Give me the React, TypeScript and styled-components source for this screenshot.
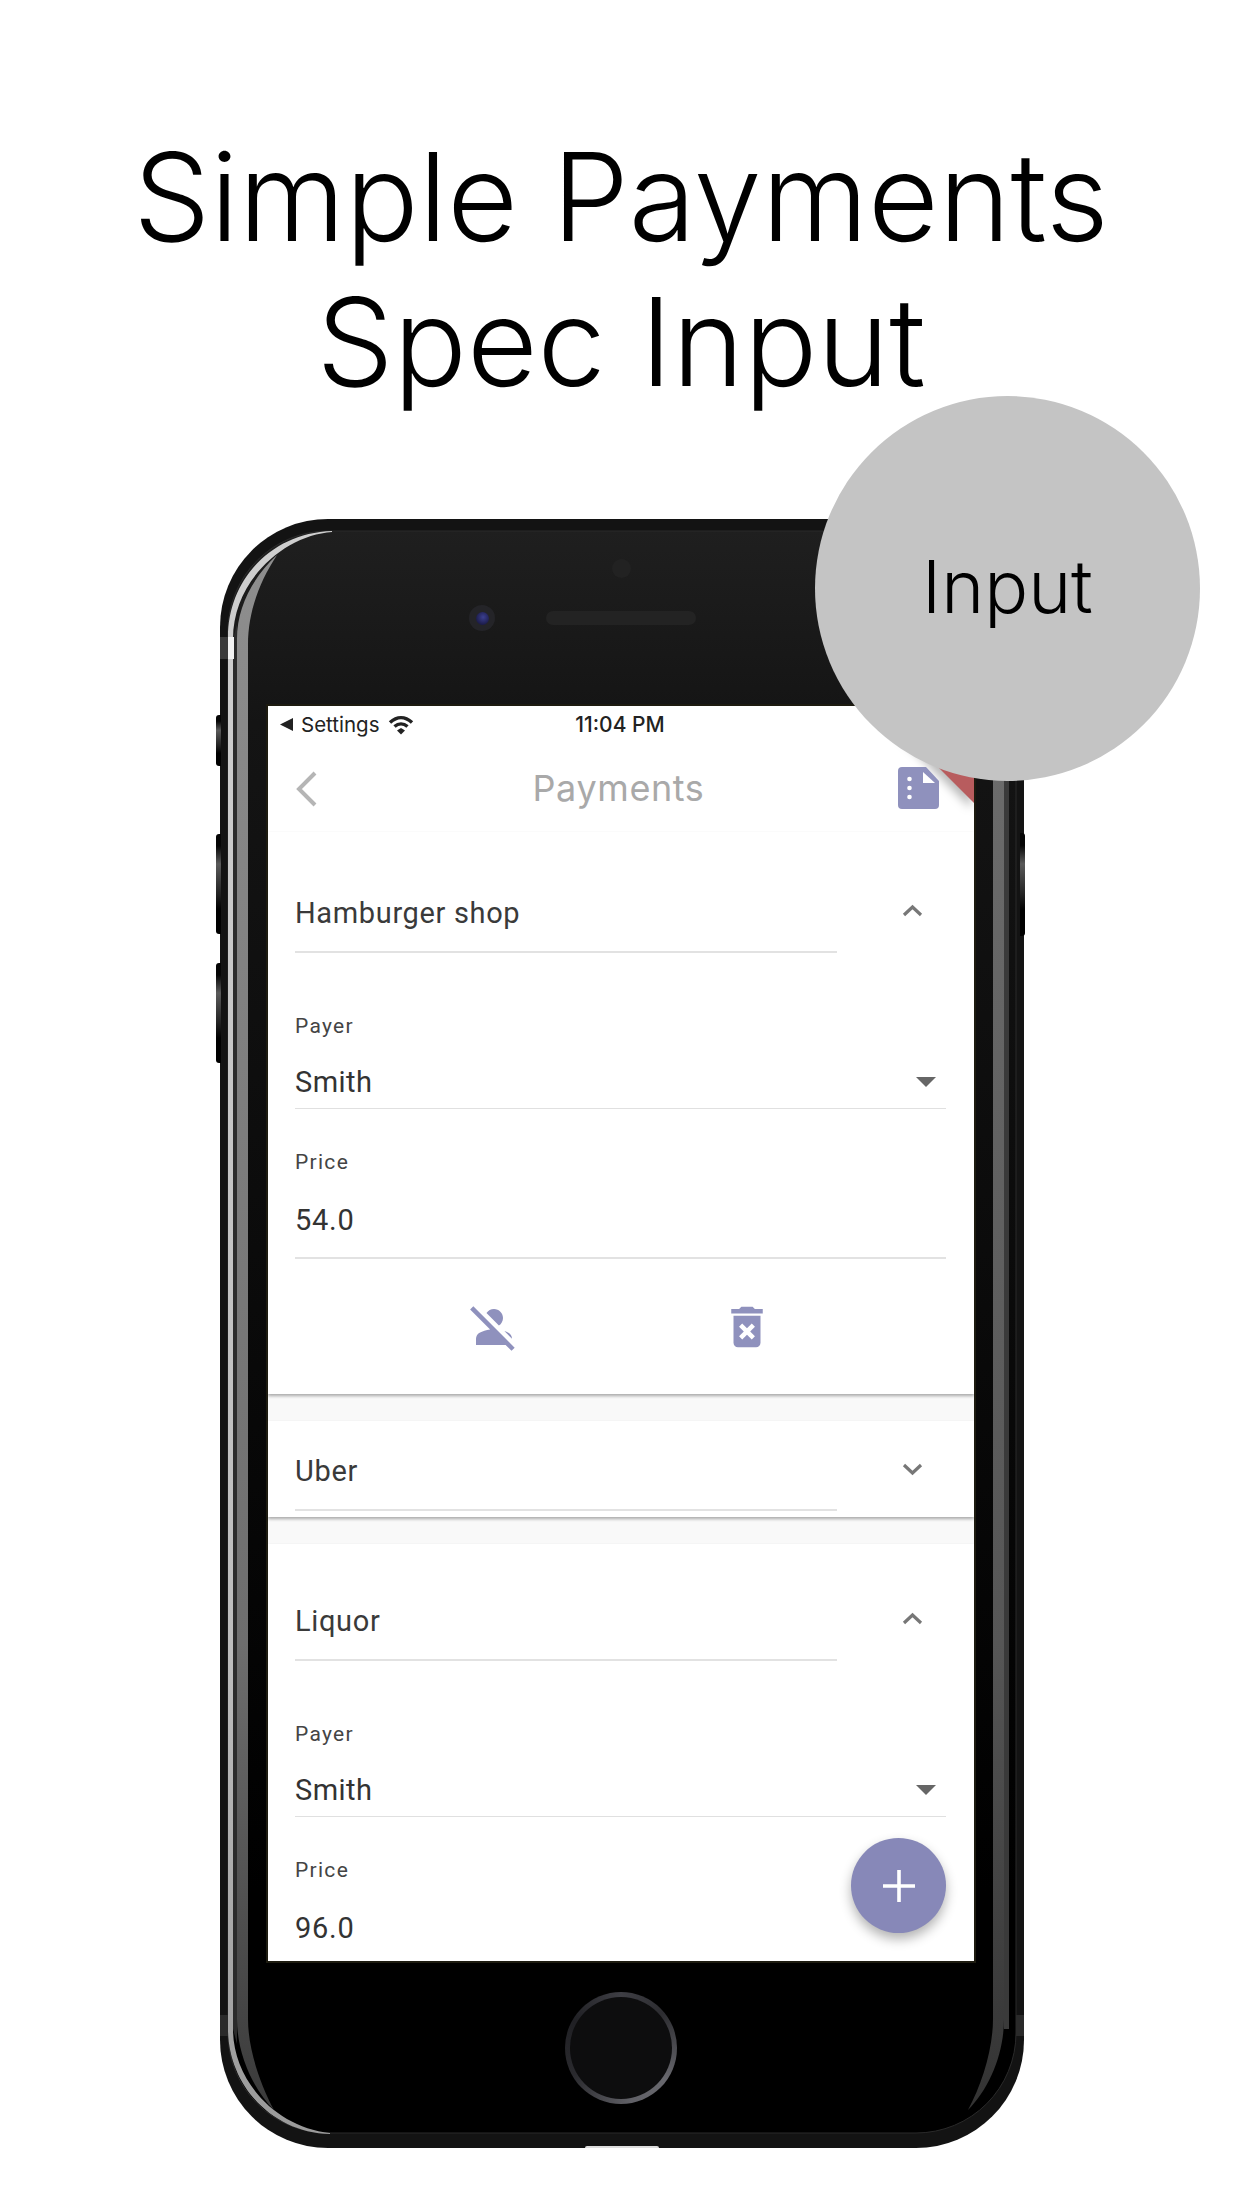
import React from "react";
import styled, { createGlobalStyle } from "styled-components";

const Global = createGlobalStyle`
  html, body { margin: 0; padding: 0; background: #fff; }
  * { box-sizing: border-box; }
`;

const ACCENT = "#8f91bd";

const Page = styled.div`
  position: relative;
  width: 1242px;
  height: 2208px;
  overflow: hidden;
  background: #fff;
  padding-top: 124px;
  display: flex;
  flex-direction: column;
`;
const Title = styled.h1`
  margin: 0 0 105px;
  text-align: center;
  font: 350 122px/145px Inter, "Liberation Sans", sans-serif;
  color: #000;
`;
const Badge = styled.div`
  position: absolute;
  z-index: 5;
  left: 815px;
  top: 396px;
  width: 385px;
  height: 385px;
  border-radius: 50%;
  background: #c4c4c4;
  display: flex;
  align-items: center;
  justify-content: center;
  padding-bottom: 4px;
  font: 350 73px/1 Inter, "Liberation Sans", sans-serif;
  color: #000;
`;
const Phone = styled.div`
  position: relative;
  width: 804px;
  height: 1629px;
  margin-left: 220px;
  display: flex;
  flex-direction: column;
  padding: 0 50px 0 48px;
`;
const Chrome = styled.svg`
  position: absolute;
  inset: 0;
`;
const SideButton = styled.div<{ $side: "left" | "right"; $top: number; $h: number }>`
  position: absolute;
  top: ${(p) => p.$top}px;
  height: ${(p) => p.$h}px;
  width: 5px;
  ${(p) => (p.$side === "left" ? "left: -4px; border-radius: 3px 0 0 3px;" : "right: -1px; border-radius: 0 3px 3px 0;")}
  background: linear-gradient(#050505 0%, #050505 12%, #5a5a5a 30%, #222 60%, #000 75%, #000 100%);
`;
const TopBezel = styled.div`
  position: relative;
  height: 187px;
  display: flex;
  flex-direction: column;
  align-items: center;
  padding-top: 40px;
`;
const Sensor = styled.div`
  width: 19px;
  height: 19px;
  border-radius: 50%;
  background: #222;
`;
const Speaker = styled.div`
  position: relative;
  margin-top: 33px;
  width: 150px;
  height: 14px;
  border-radius: 7px;
  background: #232323;
`;
const Camera = styled.div`
  position: absolute;
  left: -77px;
  top: -6px;
  width: 26px;
  height: 26px;
  border-radius: 50%;
  background: #242428;
  display: flex;
  align-items: center;
  justify-content: center;
  &::after {
    content: "";
    width: 13px;
    height: 13px;
    border-radius: 50%;
    background: radial-gradient(circle at 55% 40%, #3b3f8f, #1c1c4a 70%);
  }
`;
const Screen = styled.div`
  position: relative;
  height: 1255px;
  width: 706px;
  background: #fff;
  overflow: hidden;
  display: flex;
  flex-direction: column;
  outline: 2px solid #1d1b10;
  font-family: Roboto, "Liberation Sans", sans-serif;
`;
const BottomBezel = styled.div`
  position: relative;
  height: 187px;
  display: flex;
  justify-content: center;
  padding-top: 31px;
`;
const HomeRing = styled.div`
  width: 112px;
  height: 112px;
  border-radius: 50%;
  padding: 5px;
  background: conic-gradient(from 0deg, #3e3e44, #2c2c30 50deg, #68686e 125deg, #606066 170deg, #2a2a2e 240deg, #202024 300deg, #3e3e44);
`;
const HomeFace = styled.div`
  width: 100%;
  height: 100%;
  border-radius: 50%;
  background: #0d0d0e;
`;
const Lip = styled.div`
  position: absolute;
  left: 317px;
  bottom: 0;
  width: 74px;
  height: 2px;
  background: #ddd;
  border-radius: 2px 2px 0 0;
`;
const StatusBar = styled.div`
  height: 37px;
  margin-bottom: 3px;
  flex: none;
  display: flex;
  align-items: center;
  padding: 0 12px;
  font-family: Inter, "Liberation Sans", sans-serif;
  font-size: 20.5px;
  color: #222;
`;
const StatusLeft = styled.div`
  display: flex;
  align-items: center;
  gap: 8px;
  width: 295px;
`;
const StatusTime = styled.div`
  font-weight: 500;
  width: 90px;
  text-align: center;
  font-size: 21px;
  white-space: nowrap;
`;
const NavBar = styled.div`
  height: 86px;
  flex: none;
  display: grid;
  grid-template-columns: 1fr auto 1fr;
  align-items: center;
  padding: 0 34px 0 27px;
`;
const NavTitle = styled.div`
  font: 400 36px/1 Inter, "Liberation Sans", sans-serif;
  letter-spacing: 0.6px;
  color: #a9a9a9;
  margin: -2px -2px 0 0;
`;
const List = styled.div`
  flex: 1;
  background: #f9f9f9;
  display: flex;
  flex-direction: column;
  gap: 27px;
`;
const Card = styled.div<{ $top: number }>`
  flex: none;
  background: #fff;
  padding: ${(p) => p.$top}px 28px 0 27px;
  box-shadow: 0 2px 3px rgba(0, 0, 0, 0.32);
`;
const Header = styled.div<{ $flush?: boolean }>`
  display: flex;
  margin-bottom: ${(p) => (p.$flush ? 6 : 0)}px;
`;
const NameField = styled.div`
  width: 542px;
  padding: 0 0 20px;
  border-bottom: 2px solid #e2e2e2;
  font-size: 29px;
  line-height: 36px;
  letter-spacing: 0.65px;
  color: #3a3a3a;
`;
const HeaderIcon = styled.svg<{ $up?: boolean }>`
  margin: ${(p) => (p.$up ? 9 : 10)}px 0 0 65px;
  flex: none;
`;
const FieldLabel = styled.div<{ $gap: number }>`
  margin-top: ${(p) => p.$gap}px;
  font-size: 21px;
  line-height: 24px;
  letter-spacing: 1.3px;
  color: #444;
`;
const SelectValue = styled.div`
  margin-top: 26px;
  padding: 0 10px 8px 0;
  border-bottom: 1px solid #e0e0e0;
  display: flex;
  align-items: center;
  justify-content: space-between;
  font-size: 29px;
  line-height: 36px;
  letter-spacing: 0.45px;
  color: #333;
`;
const InputValue = styled.div<{ $last?: boolean }>`
  margin-top: 27px;
  padding: 1px 0 19px;
  border-bottom: ${(p) => (p.$last ? "none" : "2px solid #e2e2e2")};
  font-size: 29px;
  line-height: 36px;
  letter-spacing: 0.75px;
  color: #333;
`;
const Actions = styled.div`
  height: 135px;
  display: flex;
  align-items: center;
  justify-content: center;
  gap: 199px;
  margin-right: 0;
`;
const Fab = styled.div`
  position: absolute;
  right: 28px;
  bottom: 28px;
  width: 95px;
  height: 95px;
  border-radius: 50%;
  background: #8788b8;
  box-shadow: 0 6px 12px rgba(0, 0, 0, 0.3);
  display: flex;
  align-items: center;
  justify-content: center;
`;
const DebugCorner = styled.div`
  position: absolute;
  top: 0;
  right: 0;
  width: 97px;
  height: 97px;
  filter: drop-shadow(-3px 5px 5px rgba(0, 0, 0, 0.28));
  &::after {
    content: "";
    display: block;
    width: 100%;
    height: 100%;
    background: #b85c5e;
    clip-path: polygon(0 0, 100% 0, 100% 100%);
  }
`;
const BackIcon = styled.svg`
  justify-self: start;
`;
const DocIcon = styled.svg`
  position: relative;
  z-index: 1;
  justify-self: end;
  margin-top: -3px;
`;

const Chevron = ({ up }: { up?: boolean }) => (
  <HeaderIcon $up={up} width="21" height="13" viewBox="0 0 21 13">
    <polyline
      points={up ? "2,11 10.5,3 19,11" : "2,2 10.5,10 19,2"}
      fill="none"
      stroke="#777"
      strokeWidth="3.2"
    />
  </HeaderIcon>
);

const Caret = () => (
  <svg width="20" height="10" viewBox="0 0 20 10">
    <polygon points="0,0 20,0 10,10" fill="#666" />
  </svg>
);

const PersonOff = () => (
  <svg width="54" height="54" viewBox="0 0 24 24">
    <path
      fill={ACCENT}
      d="M8.65 5.82C9.36 4.72 10.6 4 12 4c2.21 0 4 1.79 4 4 0 1.4-.72 2.64-1.82 3.35L8.65 5.82zM20 17.17c-.02-1.1-.63-2.11-1.61-2.62-.54-.28-1.13-.54-1.77-.76L20 17.17zm1.19 4.02L2.81 2.81 1.39 4.22l8.89 8.89c-1.81.23-3.39.79-4.67 1.45C4.61 15.07 4 16.1 4 17.22V20h13.17l2.61 2.61 1.41-1.42z"
    />
  </svg>
);

const TrashX = () => (
  <svg width="54" height="54" viewBox="0 0 24 24">
    <path
      fill={ACCENT}
      d="M6 19c0 1.1.9 2 2 2h8c1.1 0 2-.9 2-2V7H6v12zm2.46-7.12l1.41-1.41L12 12.59l2.12-2.12 1.41 1.41L13.41 14l2.12 2.12-1.41 1.41L12 15.41l-2.12 2.12-1.41-1.41L10.59 14l-2.13-2.12zM15.5 4l-1-1h-5l-1 1H5v2h14V4z"
    />
  </svg>
);

const Fields = ({ price, last }: { price: string; last?: boolean }) => (
  <>
    <FieldLabel $gap={61}>Payer</FieldLabel>
    <SelectValue>
      <span>Smith</span>
      <Caret />
    </SelectValue>
    <FieldLabel $gap={41}>Price</FieldLabel>
    <InputValue $last={last}>{price}</InputValue>
  </>
);

const PhoneChrome = () => (
  <Chrome width="804" height="1629" viewBox="0 0 804 1629">
    <defs>
      <linearGradient id="body" x1="0" y1="0" x2="0" y2="1">
        <stop offset="0" stopColor="#1f1f1f" />
        <stop offset="0.12" stopColor="#141414" />
        <stop offset="0.85" stopColor="#000" />
        <stop offset="1" stopColor="#000" />
      </linearGradient>
      <linearGradient id="bandL" x1="0" y1="0" x2="0" y2="1">
        <stop offset="0" stopColor="#8e8e8e" />
        <stop offset="0.7" stopColor="#6e6e6e" />
        <stop offset="1" stopColor="#3a3a3a" />
      </linearGradient>
      <linearGradient id="bandR" x1="0" y1="0" x2="0" y2="1">
        <stop offset="0" stopColor="#707070" />
        <stop offset="0.7" stopColor="#565656" />
        <stop offset="1" stopColor="#333" />
      </linearGradient>
      <linearGradient id="silver" x1="0" y1="0" x2="0" y2="1">
        <stop offset="0" stopColor="#cfcfcf" />
        <stop offset="0.7" stopColor="#bdbdbd" />
        <stop offset="1" stopColor="#9a9a9a" />
      </linearGradient>
    </defs>
    <rect x="0" y="0" width="804" height="1629" rx="108" fill="#131313" />
    <rect x="8" y="12" width="788" height="1602" rx="100" fill="url(#body)" stroke="#2a2a2a" strokeWidth="1" />
    <path
      fill="url(#silver)"
      d="M8 118C8 62 50 14 112 12L112 13C66 16 13 60 13 120L13 1510C13 1562 56 1608 110 1614L110 1615C52 1614 8 1566 8 1510Z"
    />
    <path fill="#2b2b2b" d="M13 120L17 105L17 1525L13 1510Z" />
    <path
      fill="url(#bandL)"
      d="M17 1500L17 120C17 88 33 58 57 36C40 62 28 92 28 126L28 1500C28 1530 40 1565 54 1591C33 1570 17 1535 17 1500Z"
    />
    <path
      fill="url(#bandR)"
      d="M784 1500L784 120C784 88 770 58 746 36C762 62 773 92 773 126L773 1500C773 1530 762 1565 748 1591C769 1570 784 1535 784 1500Z"
    />
    <path fill="#3a3a3a" d="M784 120L789 120L789 1510L784 1510Z" />
    <rect x="0" y="118" width="8" height="22" fill="#3a3a3a" />
    <rect x="8" y="118" width="6" height="22" fill="#f2f2f2" />
    <rect x="0" y="1496" width="8" height="21" fill="#2a2a2a" />
    <rect x="796" y="1496" width="8" height="21" fill="#2a2a2a" />
  </Chrome>
);

export default function App() {
  return (
    <Page>
      <Global />
      <Title>
        Simple Payments
        <br />
        Spec Input
      </Title>
      <Badge>Input</Badge>
      <Phone>
        <PhoneChrome />
        <SideButton $side="left" $top={196} $h={51} />
        <SideButton $side="left" $top={315} $h={100} />
        <SideButton $side="left" $top={444} $h={100} />
        <SideButton $side="right" $top={314} $h={103} />
        <TopBezel>
          <Sensor />
          <Speaker>
            <Camera />
          </Speaker>
        </TopBezel>
        <Screen>
          <DebugCorner />
          <StatusBar>
            <StatusLeft>
              <svg width="13" height="13" viewBox="0 0 13 13">
                <polygon points="13,0 13,13 0,6.5" fill="#222" />
              </svg>
              <span>Settings</span>
              <svg width="26" height="20" viewBox="0 0 26 20">
                <path d="M2 7.5C9 1 17 1 24 7.5" fill="none" stroke="#222" strokeWidth="3.4" />
                <path d="M6.5 11.5C10.5 8 15.5 8 19.5 11.5" fill="none" stroke="#222" strokeWidth="3.4" />
                <polygon points="9,15.5 13,13 17,15.5 13,19.5" fill="#222" />
              </svg>
            </StatusLeft>
            <StatusTime>11:04 PM</StatusTime>
          </StatusBar>
          <NavBar>
            <BackIcon width="22" height="36" viewBox="0 0 22 36">
              <polyline points="20,2 4,18 20,34" fill="none" stroke="#b5b5b5" strokeWidth="4" />
            </BackIcon>
            <NavTitle>Payments</NavTitle>
            <DocIcon width="42" height="42" viewBox="0 0 42 42">
              <path fill={ACCENT} d="M4 0H28L41 14V38a4 4 0 0 1-4 4H4a4 4 0 0 1-4-4V4a4 4 0 0 1 4-4Z" />
              <polygon fill="#fff" points="25,5 37,16 25,16" />
              <circle cx="11.5" cy="12" r="2.3" fill="#fff" />
              <circle cx="11.5" cy="21" r="2.3" fill="#fff" />
              <circle cx="11.5" cy="30" r="2.3" fill="#fff" />
            </DocIcon>
          </NavBar>
          <List>
            <Card $top={63}>
              <Header>
                <NameField>Hamburger shop</NameField>
                <Chevron up />
              </Header>
              <Fields price="54.0" />
              <Actions>
                <PersonOff />
                <TrashX />
              </Actions>
            </Card>
            <Card $top={32}>
              <Header $flush>
                <NameField>Uber</NameField>
                <Chevron />
              </Header>
            </Card>
            <Card $top={59}>
              <Header>
                <NameField>Liquor</NameField>
                <Chevron up />
              </Header>
              <Fields price="96.0" last />
            </Card>
          </List>
          <Fab>
            <svg width="36" height="36" viewBox="0 0 36 36">
              <path d="M18 2V34M2 18H34" stroke="#fff" strokeWidth="3.6" />
            </svg>
          </Fab>
        </Screen>
        <BottomBezel>
          <HomeRing>
            <HomeFace />
          </HomeRing>
          <Lip />
        </BottomBezel>
      </Phone>
    </Page>
  );
}
